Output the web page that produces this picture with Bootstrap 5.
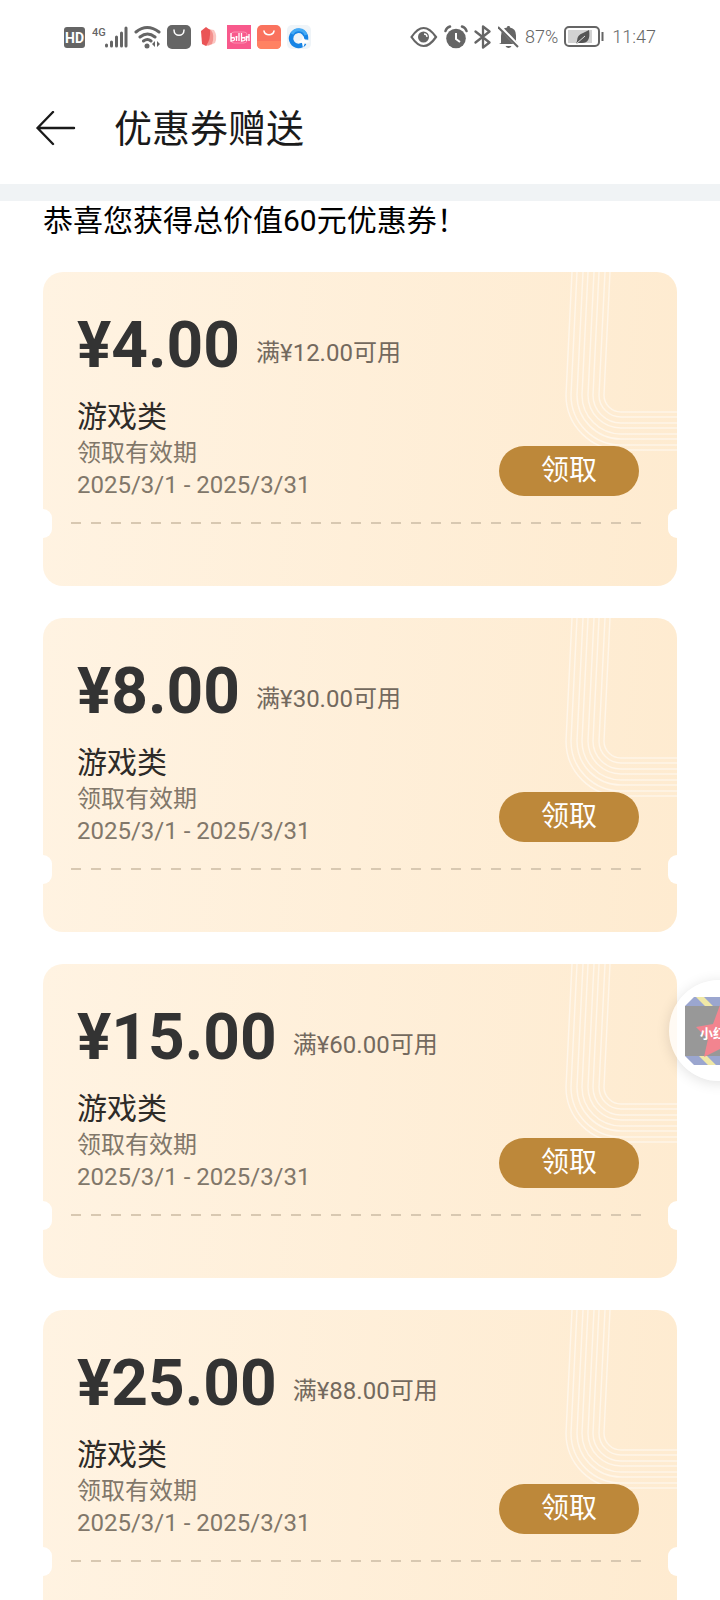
<!DOCTYPE html>
<html lang="zh-CN">
<head>
<meta charset="utf-8">
<meta name="viewport" content="width=device-width, initial-scale=1">
<title>优惠券赠送</title>
<link rel="stylesheet" href="https://cdn.jsdelivr.net/npm/bootstrap@5.3.0/dist/css/bootstrap.min.css">
<style>
  body { font-family: Roboto, "Noto Sans CJK SC", sans-serif; color: #000; background: #fff; }
  .status-bar { height: 73px; padding: 0 64px; color: #656565; font-size: 18px; font-weight: 300; line-height: 24px; }
  .status-group { gap: 6px; }
  .app-bar { height: 111px; padding: 0 36px; gap: 38px; }
  .app-bar h1 { font-size: 38px; line-height: 48px; font-weight: 400; color: #1a1a1a; }
  .band { height: 17px; background: #f0f3f5; }
  .page-body { padding: 0 43px; }
  .headline { font-size: 30px; line-height: 40px; margin-bottom: 31px; font-weight: 400; }
  .coupons { gap: 32px; }
  .coupon { height: 314px; padding-top: 39px; border-radius: 20px; background: linear-gradient(95deg, #fff3e2, #feebd0); }
  .coupon::before, .coupon::after { content: ""; position: absolute; top: 237px; width: 18px; height: 29px; border-radius: 9px; background: #fff; }
  .coupon::before { left: -9px; }
  .coupon::after { right: -9px; }
  .coupon-lines { position: absolute; top: 0; right: 0; }
  .coupon-main { position: relative; padding: 0 38px 0 34px; }
  .price { font-size: 64px; line-height: 70px; font-weight: 700; color: #333; }
  .price-row { gap: 16px; margin-bottom: 16px; }
  .terms { font-size: 24px; line-height: 32px; margin-bottom: 12px; color: #73695e; }
  .kind { font-size: 30px; line-height: 40px; font-weight: 400; color: #2e2b28; }
  .validity { font-size: 24px; line-height: 32px; color: #81776a; }
  .btn-claim { width: 140px; height: 50px; margin-bottom: 5px; padding: 0; font-size: 28px; line-height: 50px; color: #fff; background: #bd883a; border: 0; }
  .btn-claim:hover { background: #a97730; color: #fff; }
  .tear { height: 2px; margin: 21px 35px 0 28px; background: repeating-linear-gradient(90deg, #d8c8b1 0 10px, transparent 10px 20px); }
  .float-ad { position: absolute; top: 980px; right: -50px; width: 101px; height: 101px; background: rgba(255,255,255,.75); box-shadow: 0 2px 14px rgba(0,0,0,.12); }
</style>
</head>
<body>
<svg class="d-none" aria-hidden="true">
  <symbol id="stripes" viewBox="0 0 112 183">
    <g fill="none" stroke="#fff" stroke-opacity=".5" stroke-width="1.5">
      <path d="M7 0L1 123A55 55 0 0 0 56 178H112"/>
      <path d="M12 0L6 123A50 50 0 0 0 56 173H112"/>
      <path d="M18 0L12 123A44 44 0 0 0 56 167H112"/>
      <path d="M23 0L17 123A39 39 0 0 0 56 162H112"/>
      <path d="M29 0L23 123A33 33 0 0 0 56 156H112"/>
      <path d="M34 0L28 123A28 28 0 0 0 56 151H112"/>
      <path d="M40 0L34 123A22 22 0 0 0 56 145H112"/>
      <path d="M45 0L39 123A17 17 0 0 0 56 140H112"/>
    </g>
  </symbol>
</svg>
<div class="vh-100 d-flex flex-column position-relative overflow-hidden">
  <div class="status-bar d-flex align-items-center justify-content-between flex-shrink-0">
    <div class="status-group d-flex align-items-center">
      <svg width="22" height="24" viewBox="0 0 22 24"><rect y="2" width="21" height="21" rx="3" fill="#656565"/><text x="10.500" y="17.500" text-anchor="middle" font-family="Roboto" font-size="14" font-weight="700" fill="#fff">HD</text></svg>
      <svg width="36" height="24" viewBox="0 0 36 24"><text x="0" y="11" font-family="Roboto" font-size="11" font-weight="500" fill="#656565">4G</text><g stroke="#656565" stroke-width="3" stroke-linecap="round"><path d="M14.500 20v1M19.500 17v4M24.500 12v9M29.500 8v13M34 3v18"/></g></svg>
      <svg width="27" height="24" viewBox="0 0 27 24"><g fill="none" stroke="#656565" stroke-width="3" stroke-linecap="round"><path d="M2 7Q13 -2 25 7M6 12Q13.500 6 21 12M9.500 16Q13.500 13 17 16"/></g><circle cx="13" cy="21" r="2.500" fill="#656565"/><path d="M21 16v6l-3-3zM23 16v6l3-3z" fill="#656565"/></svg>
      <svg width="24" height="24" viewBox="0 0 24 24"><rect width="24" height="24" rx="5" fill="#656565"/><path d="M7 5c0 7 10 7 10 0" fill="none" stroke="#fff" stroke-width="1.500" stroke-linecap="round"/></svg>
      <svg width="24" height="24" viewBox="0 0 24 24"><path d="M11 4l6 1q4 6 1 13l-7 3z" fill="#fbc5c1"/><path d="M8 3l6 2q4 5 1 14l-6 2z" fill="#f4918e"/><path d="M4 6l5-4 4 3q1 9-4 16l-4-2z" fill="#ea5456"/></svg>
      <svg width="24" height="24" viewBox="0 0 24 24"><rect width="24" height="24" fill="#f8598c"/><path d="M7 7h10q3 0 3 3v5q0 3-3 3H7q-3 0-3-3v-5q0-3 3-3" fill="none" stroke="#fb8fb0"/><path d="M4 8v8q5 0 3-3.500l-3 .5M9.500 11v5M8.500 12h2M12 8v8M14.500 8v8q5 0 3-3.500l-3 .5M19.500 11v5M18.500 12h3M22 9v7" fill="none" stroke="#fff" stroke-width="1.300"/></svg>
      <svg width="24" height="24" viewBox="0 0 24 24"><rect width="24" height="24" rx="5" fill="#fa725e"/><path d="M0 16h24v3q0 5-5 5H5q-5 0-5-5z" fill="#ff8263"/><path d="M7 6c1 5 9 5 10 0" fill="none" stroke="#fff" stroke-width="1.500" stroke-linecap="round"/></svg>
      <svg width="24" height="24" viewBox="0 0 24 24"><rect width="24" height="24" rx="5" fill="#eff4f8"/><path d="M17.500 18A7.500 7.500 0 1 1 19 14.500" fill="none" stroke="#1784e5" stroke-width="4.500"/><path d="M5 9A7.500 7.500 0 0 1 19 10" fill="none" stroke="#45aaf5" stroke-width="3"/><path d="M16 11l2 4 5 2-5 1-2 5-1-5-5-1 5-2z" fill="#fff"/></svg>
    </div>
    <div class="status-group d-flex align-items-center">
      <svg width="28" height="24" viewBox="0 0 28 24"><path d="M1.500 12Q13.500-6 26 12Q13.500 30 1.500 12z" fill="none" stroke="#656565" stroke-width="2.200"/><circle cx="13.500" cy="12" r="5.500" fill="#656565"/><path d="M14 9q3 0 3 3" fill="none" stroke="#fff" stroke-width="1.300"/></svg>
      <svg width="24" height="24" viewBox="0 0 24 24"><circle cx="12" cy="13.500" r="9.800" fill="#656565"/><path d="M1.500 6Q2.500 2.500 6 1.500M22.500 6Q21.500 2.500 18 1.500" fill="none" stroke="#656565" stroke-width="2.500" stroke-linecap="round"/><path d="M12 8v6l4 3" fill="none" stroke="#fff" stroke-width="2"/></svg>
      <svg width="18" height="24" viewBox="0 0 18 24"><path d="M1.500 6.500L15.500 17.500 9 22.500V1.500L15.500 6.500 1.500 17.500" fill="none" stroke="#656565" stroke-width="2.300" stroke-linejoin="round" stroke-linecap="round"/></svg>
      <svg width="21" height="24" viewBox="0 0 21 24"><path d="M3 18V11Q3 3 9 2.500L9.500 1h2l.5 1.500q6 1 6 8V16l2 3H1z" fill="#656565"/><path d="M7.500 21h6q-1 2-3 2t-3-2" fill="#656565"/><path d="M1 1l20 21" stroke="#fff" stroke-width="4"/><path d="M0 2l20 20" stroke="#656565" stroke-width="2"/></svg>
      <span>87%</span>
      <svg width="42" height="24" viewBox="0 0 42 24"><rect x="1" y="2" width="34" height="19" rx="4" fill="none" stroke="#656565" stroke-width="2"/><rect x="4" y="5" width="24" height="13" fill="#d2d2d2"/><path d="M25 5q2 13-7 13h-4l-2 1 1-3q0-6 6-8z" fill="#555"/><path d="M12 19l9-8" stroke="#ddd"/><path d="M38.500 7v9" stroke="#656565" stroke-width="2"/></svg>
      <span>11:47</span>
    </div>
  </div>
  <header class="app-bar d-flex align-items-center flex-shrink-0">
    <button class="btn p-0 border-0 d-flex" type="button" aria-label="返回">
      <svg width="40" height="36" viewBox="0 0 40 36"><path d="M17 1L1.500 17L17 33M1.500 17H38" fill="none" stroke="#1a1a1a" stroke-width="2.400" stroke-linecap="round" stroke-linejoin="round"/></svg>
    </button>
    <h1 class="m-0">优惠券赠送</h1>
  </header>
  <div class="band flex-shrink-0"></div>
  <main class="page-body flex-grow-1 overflow-hidden">
    <h2 class="headline">恭喜您获得总价值60元优惠券！</h2>
    <div class="coupons d-flex flex-column">
      <article class="coupon position-relative">
        <svg class="coupon-lines" width="112" height="183"><use href="#stripes"/></svg>
        <div class="coupon-main d-flex justify-content-between align-items-end">
          <div>
            <div class="price-row d-flex align-items-end"><span class="price">¥4.00</span><span class="terms">满¥12.00可用</span></div>
            <h3 class="kind m-0">游戏类</h3>
            <div class="validity">领取有效期<br>2025/3/1 - 2025/3/31</div>
          </div>
          <button class="btn btn-claim rounded-pill" type="button">领取</button>
        </div>
        <div class="tear"></div>
      </article>
      <article class="coupon position-relative">
        <svg class="coupon-lines" width="112" height="183"><use href="#stripes"/></svg>
        <div class="coupon-main d-flex justify-content-between align-items-end">
          <div>
            <div class="price-row d-flex align-items-end"><span class="price">¥8.00</span><span class="terms">满¥30.00可用</span></div>
            <h3 class="kind m-0">游戏类</h3>
            <div class="validity">领取有效期<br>2025/3/1 - 2025/3/31</div>
          </div>
          <button class="btn btn-claim rounded-pill" type="button">领取</button>
        </div>
        <div class="tear"></div>
      </article>
      <article class="coupon position-relative">
        <svg class="coupon-lines" width="112" height="183"><use href="#stripes"/></svg>
        <div class="coupon-main d-flex justify-content-between align-items-end">
          <div>
            <div class="price-row d-flex align-items-end"><span class="price">¥15.00</span><span class="terms">满¥60.00可用</span></div>
            <h3 class="kind m-0">游戏类</h3>
            <div class="validity">领取有效期<br>2025/3/1 - 2025/3/31</div>
          </div>
          <button class="btn btn-claim rounded-pill" type="button">领取</button>
        </div>
        <div class="tear"></div>
      </article>
      <article class="coupon position-relative">
        <svg class="coupon-lines" width="112" height="183"><use href="#stripes"/></svg>
        <div class="coupon-main d-flex justify-content-between align-items-end">
          <div>
            <div class="price-row d-flex align-items-end"><span class="price">¥25.00</span><span class="terms">满¥88.00可用</span></div>
            <h3 class="kind m-0">游戏类</h3>
            <div class="validity">领取有效期<br>2025/3/1 - 2025/3/31</div>
          </div>
          <button class="btn btn-claim rounded-pill" type="button">领取</button>
        </div>
        <div class="tear"></div>
      </article>
    </div>
  </main>
  <button class="float-ad btn rounded-circle border-0 p-0 d-flex align-items-center justify-content-center" type="button" aria-label="活动">
    <svg width="70" height="68" viewBox="0 0 70 68">
      <path d="M9 0H61L70 9V59L61 68H9L0 59V9z" fill="#9ba6cf"/>
      <path d="M11 0h8l9 9h-8zM14 59h8l9 9h-8z" fill="#f0e8a6"/>
      <rect y="9" width="70" height="50" fill="#989898"/>
      <path d="M35 8l6 19 19 2-14 14 5 18-16-9-16 8 4-18-12-12 17-3z" fill="#f2848f"/>
      <text x="15" y="41" font-family="Noto Sans CJK SC" font-size="13" font-weight="700" fill="#fff">小红</text>
    </svg>
  </button>
</div>
<script src="https://cdn.jsdelivr.net/npm/bootstrap@5.3.0/dist/js/bootstrap.bundle.min.js"></script>
</body>
</html>
